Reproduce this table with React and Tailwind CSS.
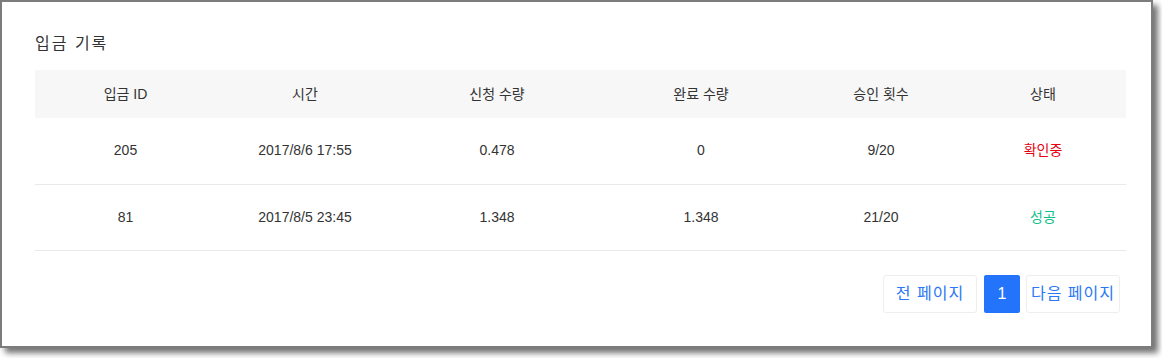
const COLUMNS = [
  { label: '입금 ID', w: 'w-[181px]' },
  { label: '시간', w: 'w-[178px]' },
  { label: '신청 수량', w: 'w-[206px]' },
  { label: '완료 수량', w: 'w-[202px]' },
  { label: '승인 횟수', w: 'w-[158px]' },
  { label: '상태', w: 'w-[166px]' },
];

const ROWS = [
  { id: '205', time: '2017/8/6 17:55', requested: '0.478', done: '0', approvals: '9/20', status: '확인중', ok: false },
  { id: '81', time: '2017/8/5 23:45', requested: '1.348', done: '1.348', approvals: '21/20', status: '성공', ok: true },
];

export default function App() {
  return (
    <div className="w-[1162px] h-[358px] bg-white font-['Liberation_Sans','Noto_Sans_CJK_KR',sans-serif]">
      <div className="w-[1153px] h-[348px] border-2 border-[#7c7c7c] bg-white shadow-[5px_5px_6px_rgba(0,0,0,0.55)] pl-[33px] pr-[25px] pt-[30px]">
        <h2 className="text-[16px] leading-[24px] tracking-[2px] text-[#333] mb-[14px]">입금 기록</h2>

        <table className="w-[1091px] table-fixed border-collapse text-[14px] text-[#333]">
          <thead>
            <tr className="bg-[#f7f7f7] h-[48px]">
              {COLUMNS.map((col) => (
                <th key={col.label} className={`${col.w} font-normal text-center`}>
                  {col.label}
                </th>
              ))}
            </tr>
          </thead>
          <tbody>
            {ROWS.map((row) => (
              <tr key={row.id} className="h-[66px] border-b border-[#e9e9e9] text-center">
                <td>{row.id}</td>
                <td>{row.time}</td>
                <td>{row.requested}</td>
                <td>{row.done}</td>
                <td>{row.approvals}</td>
                <td className={row.ok ? 'text-[#12c08a]' : 'text-[#e60012]'}>{row.status}</td>
              </tr>
            ))}
          </tbody>
        </table>

        <div className="flex justify-end items-center gap-[6px] mt-[24px] pr-[6px]">
          <button className="w-[94px] h-[38px] rounded-[3px] border border-[#eeeeee] text-[16px] tracking-[1px] text-[#2a78f6] bg-white">
            전 페이지
          </button>
          <button className="w-[36px] h-[38px] ml-px rounded-[2px] bg-[#2374fb] text-white text-[16px]">1</button>
          <button className="w-[94px] h-[38px] rounded-[3px] border border-[#eeeeee] text-[16px] tracking-[1px] text-[#2a78f6] bg-white">
            다음 페이지
          </button>
        </div>
      </div>
    </div>
  );
}
